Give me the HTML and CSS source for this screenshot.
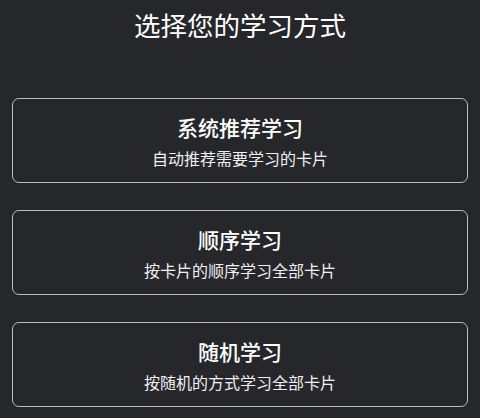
FILE: index.html
```html
<!DOCTYPE html>
<html lang="zh-CN">
<head>
<meta charset="utf-8">
<title>选择您的学习方式</title>
<link rel="stylesheet" href="styles.css">
</head>
<body>
<main class="page">
  <h1 class="heading">选择您的学习方式</h1>
  <div class="options">
    <button class="card" type="button">
      <span class="card-title">系统推荐学习</span>
      <span class="card-desc">自动推荐需要学习的卡片</span>
    </button>
    <button class="card" type="button">
      <span class="card-title">顺序学习</span>
      <span class="card-desc">按卡片的顺序学习全部卡片</span>
    </button>
    <button class="card" type="button">
      <span class="card-title">随机学习</span>
      <span class="card-desc">按随机的方式学习全部卡片</span>
    </button>
  </div>
</main>
</body>
</html>
```
FILE: styles.css
```css
html, body {
  margin: 0;
  padding: 0;
  background: #26272b;
}
body {
  font-family: "Noto Sans CJK SC", "Noto Sans", sans-serif;
  color: #ffffff;
}
.page {
  display: flex;
  flex-direction: column;
  padding: 6px 12px 0;
}
.heading {
  margin: 0;
  font-size: 26.5px;
  line-height: 37px;
  font-weight: 400;
  text-align: center;
  color: #ffffff;
}
.options {
  display: flex;
  flex-direction: column;
  gap: 27px;
  margin-top: 55px;
}
.card {
  box-sizing: border-box;
  height: 85px;
  display: flex;
  flex-direction: column;
  align-items: center;
  justify-content: center;
  gap: 6px;
  margin: 0;
  padding: 0;
  background: transparent;
  border: 1px solid #bdbdbd;
  border-radius: 7px;
  font-family: inherit;
  color: #ffffff;
}
.card-title {
  font-size: 21px;
  line-height: 28px;
  font-weight: 500;
}
.card-desc {
  font-size: 16px;
  line-height: 22px;
  font-weight: 400;
  color: #f0f0f0;
}
```
